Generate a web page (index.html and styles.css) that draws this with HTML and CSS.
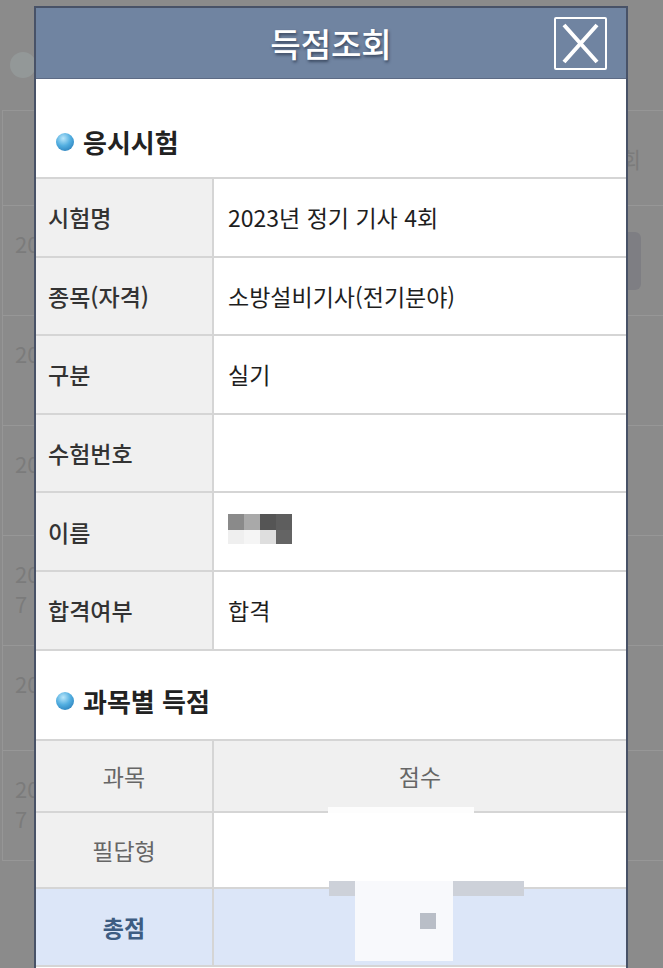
FILE: index.html
```html
<!DOCTYPE html>
<html lang="ko">
<head>
    <meta charset="UTF-8">
    <meta name="viewport" content="width=device-width, initial-scale=1.0">
    <title>득점조회</title>
    <link rel="stylesheet" href="styles.css">
</head>
<body>
    <!-- page behind the dimmed overlay -->
    <div class="page">
        <div class="page-head"><span class="page-bullet"></span></div>
        <div class="page-list">
            <div class="page-row row-head"><span></span><span class="right-text">조회</span></div>
            <div class="page-row row-a"><span class="year">20</span><span class="right-btn"></span></div>
            <div class="page-row row-a"><span class="year">20</span></div>
            <div class="page-row row-a"><span class="year">20</span></div>
            <div class="page-row row-a"><span class="year">20<br>7</span></div>
            <div class="page-row row-b"><span class="year">20</span></div>
            <div class="page-row row-a"><span class="year">20<br>7</span></div>
        </div>
    </div>

    <div class="modal">
        <div class="modal-header">
            <h1 class="modal-title">득점조회</h1>
            <button class="close-button" type="button" aria-label="닫기">
                <svg width="39" height="41" viewBox="0 0 39 41">
                    <path d="M3 2 L36 39 M36 2 L3 39" stroke="#fff" stroke-width="4" fill="none"/>
                </svg>
            </button>
        </div>

        <div class="section-title first"><span class="bullet"></span>응시시험</div>
        <div class="info-table">
            <div class="info-row"><div class="label">시험명</div><div class="value">2023년 정기 기사 4회</div></div>
            <div class="info-row"><div class="label">종목(자격)</div><div class="value">소방설비기사(전기분야)</div></div>
            <div class="info-row"><div class="label">구분</div><div class="value">실기</div></div>
            <div class="info-row"><div class="label">수험번호</div><div class="value"></div></div>
            <div class="info-row">
                <div class="label">이름</div>
                <div class="value">
                    <span class="mosaic">
                        <i style="background:#8a8a8a"></i><i style="background:#a9a9a9"></i><i style="background:#555"></i><i style="background:#5e5e5e"></i>
                        <i style="background:#efefef"></i><i style="background:#f5f5f5"></i><i style="background:#dedede"></i><i style="background:#646464"></i>
                    </span>
                </div>
            </div>
            <div class="info-row"><div class="label">합격여부</div><div class="value">합격</div></div>
        </div>

        <div class="section-title second"><span class="bullet"></span>과목별 득점</div>
        <div class="score-table">
            <div class="score-row score-head"><div class="label">과목</div><div class="value">점수</div></div>
            <div class="score-row score-mid"><div class="label">필답형</div><div class="value"></div></div>
            <div class="score-row score-total"><div class="label">총점</div><div class="value"></div></div>
            <div class="blur blur-a"></div>
            <div class="blur blur-b"></div>
            <div class="blur blur-c"></div>
            <div class="blur blur-d"></div>
            <div class="blur blur-e"></div>
        </div>
    </div>
</body>
</html>
```

FILE: styles.css
```css
/* General Styles */
html, body {
    height: 968px;
    overflow: hidden;
}

body {
    margin: 0;
    background: #8b8b8b;
    font-family: 'Noto Sans CJK KR', 'Noto Sans', sans-serif;
    color: #2a2a2a;
    position: relative;
}

/* Dimmed page underneath */
.page-head {
    height: 110px;
    box-sizing: border-box;
    padding: 52px 0 0 10px;
}

.page-bullet {
    display: block;
    width: 26px;
    height: 26px;
    border-radius: 50%;
    background: #939898;
}

.page-list {
    margin-left: 2px;
    border-left: 1px solid #969696;
    border-top: 1px solid #969696;
}

.page-row {
    display: flex;
    justify-content: space-between;
    border-bottom: 1px solid #979797;
    box-sizing: border-box;
}

.row-head {
    height: 95px;
    align-items: center;
}

.row-a {
    height: 110px;
}

.row-b {
    height: 105px;
}

.year {
    padding: 22px 0 0 12px;
    font-size: 22px;
    line-height: 30px;
    color: #7b7b7b;
}

.right-text {
    padding-right: 22px;
    font-size: 22px;
    color: #7b7b7b;
}

.right-btn {
    width: 60px;
    height: 58px;
    margin: 26px 22px 0 0;
    border-radius: 6px;
    background: #7e7e83;
}

/* Modal */
.modal {
    position: absolute;
    left: 34px;
    top: 6px;
    bottom: 0;
    width: 590px;
    border: 2px solid #485267;
    border-bottom: none;
    background: #fff;
    overflow: hidden;
}

.modal-header {
    position: relative;
    height: 70px;
    background: #7084a1;
    border-bottom: 1px solid #5d6b85;
    display: flex;
    justify-content: center;
    align-items: center;
}

.modal-title {
    margin: 0;
    font-size: 33px;
    font-weight: 500;
    color: #fff;
    text-shadow: 1px 2px 3px rgba(20, 30, 50, 0.6);
}

.close-button {
    position: absolute;
    right: 19px;
    top: 9px;
    width: 53px;
    height: 53px;
    padding: 0;
    border: 2px solid #fff;
    border-radius: 2px;
    background: transparent;
    display: flex;
    justify-content: center;
    align-items: center;
}

.section-title {
    display: flex;
    align-items: center;
    gap: 9px;
    padding-left: 20px;
    font-size: 26px;
    font-weight: 700;
    line-height: 36px;
    color: #222;
}

.section-title.first {
    padding-top: 45px;
    padding-bottom: 17px;
}

.section-title.second {
    padding-top: 32px;
    padding-bottom: 20px;
}

.bullet {
    width: 18px;
    height: 18px;
    border-radius: 50%;
    background: radial-gradient(circle at 40% 30%, #b9e6fa 0%, #52aee0 45%, #1c6fae 100%);
}

/* Info table */
.info-table {
    border-top: 2px solid #d5d5d5;
}

.info-row,
.score-row {
    display: grid;
    grid-template-columns: 178px 1fr;
    border-bottom: 2px solid #d5d5d5;
    box-sizing: border-box;
    height: 78.6px;
}

.label {
    background: #f0f0f0;
    border-right: 2px solid #d5d5d5;
    display: flex;
    align-items: center;
    padding-left: 12px;
    font-size: 23px;
    font-weight: 500;
    color: #333;
}

.value {
    display: flex;
    align-items: center;
    padding-left: 14px;
    font-size: 23px;
    color: #1e1e1e;
}

.mosaic {
    display: grid;
    grid-template-columns: repeat(4, 16px);
    grid-template-rows: 16px 14px;
    margin-top: -6px;
}

/* Score table */
.score-table {
    position: relative;
    border-top: 2px solid #d5d5d5;
}

.score-table .label {
    justify-content: center;
    padding: 0;
    font-weight: 400;
    color: #666;
}

.score-table .value {
    justify-content: center;
    padding: 0;
    color: #666;
}

.score-head {
    height: 72px;
}

.score-head .value {
    background: #f0f0f0;
}

.score-mid {
    height: 76px;
}

.score-total {
    height: 78px;
    background: #dce6f8;
}

.score-table .score-total .label {
    background: #dce6f8;
    font-weight: 700;
    color: #3d5c82;
}

.blur {
    position: absolute;
}

.blur-a {
    left: 292px;
    top: 66px;
    width: 146px;
    height: 6px;
    background: #fdfdfd;
}

.blur-b {
    left: 293px;
    top: 140px;
    width: 26px;
    height: 15px;
    background: #cdd1d9;
}

.blur-c {
    left: 417px;
    top: 140px;
    width: 71px;
    height: 15px;
    background: #cdd1d9;
}

.blur-d {
    left: 319px;
    top: 140px;
    width: 98px;
    height: 80px;
    background: #f8f9fc;
}

.blur-e {
    left: 384px;
    top: 172px;
    width: 16px;
    height: 16px;
    background: #b9bec7;
}
```
